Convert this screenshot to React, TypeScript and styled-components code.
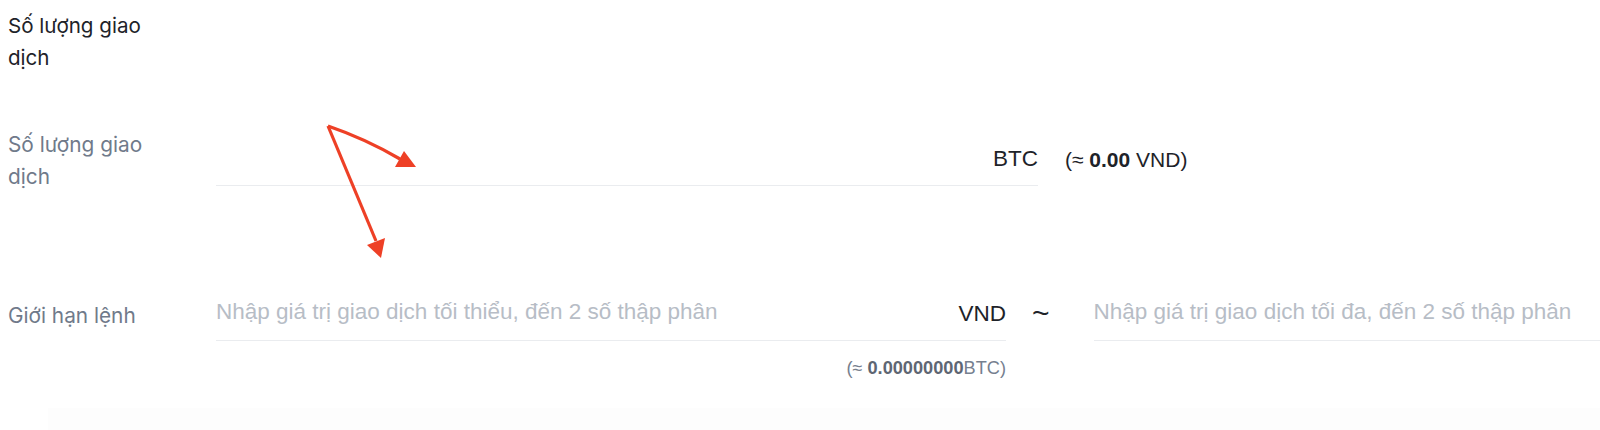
import React from "react";
import styled, { createGlobalStyle } from "styled-components";

const GlobalStyle = createGlobalStyle`
  html, body {
    margin: 0;
    padding: 0;
    background: #fff;
  }
  body {
    font-family: Inter, "Noto Sans", sans-serif;
    color: #1e2329;
  }
`;

const Page = styled.div`
  position: relative;
  width: 1600px;
  height: 430px;
  overflow: hidden;
  box-sizing: border-box;
  padding: 10px 0 0 8px;
`;

const Title = styled.div`
  width: 150px;
  font-size: 20.6px;
  line-height: 32px;
  color: #1e2329;
`;

const Row = styled.div<{ $top: number; $align?: string }>`
  display: flex;
  align-items: ${(p) => p.$align || "center"};
  margin-top: ${(p) => p.$top}px;
`;

const Label = styled.div<{ $offset?: number }>`
  width: 150px;
  margin-right: 58px;
  margin-top: ${(p) => p.$offset || 0}px;
  flex-shrink: 0;
  font-size: 20.8px;
  line-height: 32px;
  color: #707a8a;
`;

const FieldColumn = styled.div`
  display: flex;
  flex-direction: column;
  align-items: flex-end;
`;

const Field = styled.div<{ $width?: number }>`
  display: flex;
  align-items: center;
  box-sizing: border-box;
  height: 50px;
  padding-bottom: 3px;
  border-bottom: 1px solid #eaecef;
  width: ${(p) => (p.$width ? `${p.$width}px` : "auto")};
  flex: ${(p) => (p.$width ? "0 0 auto" : "1 1 auto")};
`;

const Input = styled.input`
  flex: 1;
  min-width: 0;
  border: none;
  outline: none;
  padding: 0;
  margin-bottom: 4px;
  background: transparent;
  font-family: "Liberation Sans", Arial, sans-serif;
  font-size: 22.5px;
  line-height: 26px;
  color: #1e2329;

  &::placeholder {
    color: #b7bdc6;
  }
`;

const Unit = styled.span`
  font-family: "Liberation Sans", Arial, sans-serif;
  font-size: 22.5px;
  line-height: 24px;
  color: #1e2329;
`;

const Estimate = styled.div<{ $muted?: boolean; $size: number }>`
  font-family: "Liberation Sans", Arial, sans-serif;
  font-size: ${(p) => p.$size}px;
  line-height: 20px;
  color: ${(p) => (p.$muted ? "#76808f" : "#1e2329")};
  white-space: nowrap;

  b {
    font-weight: 700;
    color: ${(p) => (p.$muted ? "#5e6673" : "#1e2329")};
  }
`;

const SideEstimate = styled(Estimate)`
  margin-left: 27px;
  padding-bottom: 2px;
`;

const BelowEstimate = styled(Estimate)`
  margin-top: 17px;
`;

const Tilde = styled.div`
  height: 50px;
  display: flex;
  align-items: center;
  margin: 0 44px 0 26px;
  padding-bottom: 6px;
  box-sizing: border-box;
  font-family: "Liberation Sans", Arial, sans-serif;
  font-size: 30px;
  line-height: 30px;
  color: #1e2329;
`;

const Footer = styled.div`
  position: absolute;
  left: 48px;
  right: 0;
  top: 408px;
  height: 22px;
  background: #fdfdfd;
`;

const Annotation = styled.svg`
  position: absolute;
  left: 0;
  top: 0;
  pointer-events: none;
`;

export default function App() {
  return (
    <>
      <GlobalStyle />
      <Page>
        <Title>Số lượng giao dịch</Title>

        <Row $top={55}>
          <Label>Số lượng giao dịch</Label>
          <Field $width={822}>
            <Input />
            <Unit>BTC</Unit>
          </Field>
          <SideEstimate $size={21}>
            (≈ <b>0.00</b> VND)
          </SideEstimate>
        </Row>

        <Row $top={98} $align="flex-start">
          <Label $offset={9}>Giới hạn lệnh</Label>
          <FieldColumn>
            <Field $width={790}>
              <Input placeholder="Nhập giá trị giao dịch tối thiểu, đến 2 số thập phân" />
              <Unit>VND</Unit>
            </Field>
            <BelowEstimate $muted $size={18.2}>
              (≈ <b>0.00000000</b>BTC)
            </BelowEstimate>
          </FieldColumn>
          <Tilde>~</Tilde>
          <Field>
            <Input placeholder="Nhập giá trị giao dịch tối đa, đến 2 số thập phân" />
          </Field>
        </Row>

        <Footer />

        <Annotation width="600" height="300" viewBox="0 0 600 300">
          <g fill="#ee4026" stroke="#ee4026">
            <path d="M328 126 Q366 139 400 159" fill="none" strokeWidth="3.2" />
            <polygon points="395,167 416,167 404,151" stroke="none" />
            <path d="M328 126 L376 241" fill="none" strokeWidth="3.2" />
            <polygon points="367,245 385,238 381,258" stroke="none" />
          </g>
        </Annotation>
      </Page>
    </>
  );
}
